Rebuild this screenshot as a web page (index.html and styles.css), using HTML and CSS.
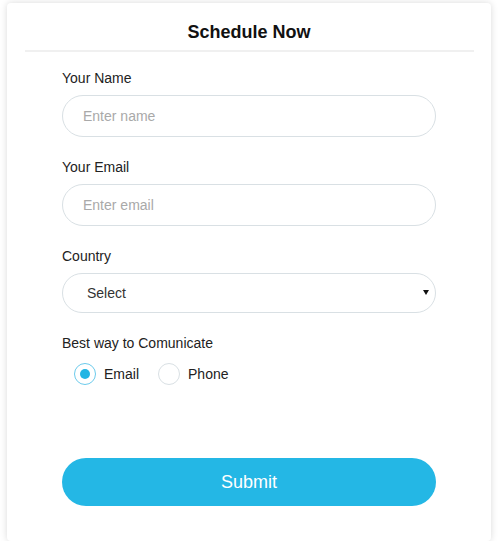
FILE: index.html
```html
<!DOCTYPE html>
<html lang="en">
<head>
<meta charset="utf-8">
<title>Schedule Now</title>
<link rel="stylesheet" href="styles.css">
</head>
<body>
<div class="card">
  <h2 class="card-title">Schedule Now</h2>
  <div class="divider"></div>
  <form class="form">
    <div class="field">
      <label class="field-label" for="name">Your Name</label>
      <input class="text-input" id="name" type="text" placeholder="Enter name">
    </div>
    <div class="field">
      <label class="field-label" for="email">Your Email</label>
      <input class="text-input" id="email" type="text" placeholder="Enter email">
    </div>
    <div class="field">
      <label class="field-label" for="country">Country</label>
      <div class="select-wrap">
        <select class="select-input" id="country">
          <option>Select</option>
        </select>
      </div>
    </div>
    <div class="field field-radio">
      <span class="field-label">Best way to Comunicate</span>
      <div class="radio-row">
        <label class="radio-option"><input class="radio" type="radio" name="way" checked><span>Email</span></label>
        <label class="radio-option"><input class="radio" type="radio" name="way"><span>Phone</span></label>
      </div>
    </div>
    <button class="submit" type="button">Submit</button>
  </form>
</div>
</body>
</html>
```

FILE: styles.css
```css
* { box-sizing: border-box; }
html, body { margin: 0; padding: 0; background: #ffffff; }
body {
  font-family: "Liberation Sans", Arial, sans-serif;
  color: #222;
  padding: 3px 0 0 7px;
}
.card {
  width: 484px;
  background: #fff;
  border-radius: 4px;
  box-shadow: 0 0 7px rgba(0, 0, 0, 0.15);
  padding: 18px 0 35px;
}
.card-title {
  margin: 0;
  font-size: 18px;
  line-height: 22px;
  font-weight: bold;
  text-align: center;
  color: #111;
}
.divider {
  height: 2px;
  background: #f0f0f0;
  margin: 7px 17px 0 18px;
}
.form {
  display: flex;
  flex-direction: column;
  gap: 22px;
  padding: 18px 55px 0;
}
.field {
  display: flex;
  flex-direction: column;
}
.field-label {
  font-size: 14px;
  line-height: 17px;
  color: #222;
  margin-bottom: 8px;
}
.text-input {
  height: 42px;
  border: 1.5px solid #d9e0e4;
  border-radius: 21px;
  padding: 0 0 0 20px;
  font-family: inherit;
  font-size: 14px;
  color: #333;
  outline: none;
  background: #fff;
}
.text-input::placeholder { color: #a9a9a9; }
.select-wrap { position: relative; }
.select-input {
  width: 100%;
  height: 40px;
  -webkit-appearance: none;
  appearance: none;
  border: 1.5px solid #d9e0e4;
  border-radius: 20px;
  padding: 0 0 0 24px;
  font-family: inherit;
  font-size: 14px;
  color: #333;
  background: #fff;
  outline: none;
}
.select-wrap::after {
  content: "";
  position: absolute;
  right: 7px;
  top: 17px;
  border-left: 3px solid transparent;
  border-right: 3px solid transparent;
  border-top: 5px solid #111;
}
.field-radio .field-label { margin-bottom: 11px; }
.radio-row {
  display: flex;
  align-items: center;
  gap: 19px;
  padding-left: 12px;
}
.radio-option {
  display: flex;
  align-items: center;
  gap: 8px;
  font-size: 14px;
  line-height: 22px;
  color: #222;
}
.radio {
  -webkit-appearance: none;
  appearance: none;
  margin: 0;
  width: 22px;
  height: 22px;
  border-radius: 50%;
  border: 1.5px solid #d9e0e4;
  background: #fff;
  display: grid;
  place-items: center;
}
.radio:checked { border-color: #6ccbec; }
.radio:checked::before {
  content: "";
  width: 10px;
  height: 10px;
  border-radius: 50%;
  background: #22b5e4;
}
.submit {
  margin-top: 51px;
  height: 48px;
  border: none;
  border-radius: 24px;
  background: #24b7e5;
  color: #fff;
  font-family: inherit;
  font-size: 18px;
  cursor: pointer;
}
```
